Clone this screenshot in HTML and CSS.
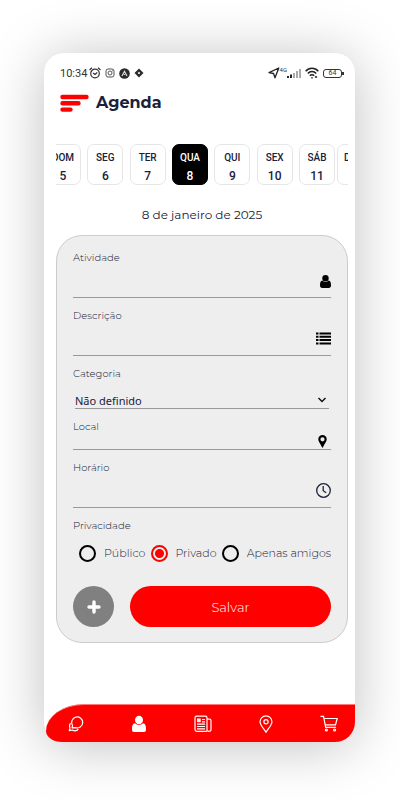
FILE: index.html
```html
<!DOCTYPE html>
<html lang="pt-BR">
<head>
<meta charset="utf-8">
<meta name="viewport" content="width=device-width, initial-scale=1">
<title>Agenda</title>
<link rel="stylesheet" href="styles.css">
</head>
<body>
<div class="phone">
  <div class="status">
    <span class="status-time">10:34</span>
    <svg width="12" height="12" viewBox="0 0 12 12" fill="none" stroke="#333" stroke-width="1.2"><circle cx="6" cy="6.5" r="4.3"/><path d="M.5 3 3 .8M11.5 3 9 .8M4 6l2 1.5L8.200 5.500"/></svg>
    <svg class="status-gap" width="10" height="10" viewBox="0 0 10 10" fill="none" stroke="#555"><rect x="1" y="1" width="8" height="8" rx="2"/><circle cx="5" cy="5" r="2"/><path d="M7 2.800h.8"/></svg>
    <svg class="status-gap" width="11" height="11" viewBox="0 0 11 11"><circle cx="5.500" cy="5.500" r="5.300" fill="#2b2b2b"/><path d="M3 8 5.500 3.200 8 8M5.500 6v1" fill="none" stroke="#ddd" stroke-width="1.200"/></svg>
    <svg class="status-gap" width="10" height="10" viewBox="0 0 10 10"><path d="M5 .5 9.500 5 5 9.500.5 5z" fill="#2b2b2b"/><path d="M5 3.700 6.300 5 5 6.300 3.700 5z" fill="#fff"/></svg>
    <span class="status-space"></span>
    <svg width="12" height="12" viewBox="0 0 12 12" fill="none" stroke="#222" stroke-width="1.300" stroke-linejoin="round"><path d="M10.800 1 7 10.800 5.500 6.500 1 5.600z"/></svg>
    <span class="status-net">4G</span>
    <svg class="status-bars" width="14" height="10" viewBox="0 0 14 10"><path d="M0 8h2v2H0zM3 6.500h2V10H3z" fill="#222"/><path d="M6 5h2v5H6zM9 3h2v7H9zM12 1h2v9h-2z" fill="#aaa"/></svg>
    <svg class="status-wifi" width="14" height="12" viewBox="0 0 14 12" fill="none" stroke="#222" stroke-width="1.500"><path d="M.7 4.200C4 .4 10 .4 13.300 4.200M2.800 6.500c2.300-2.700 6.100-2.700 8.400 0M4.800 8.700c1.200-1.400 3.200-1.400 4.400 0"/><path d="M6.200 10.800h1.600M10 10.500l1-1 1 1" stroke-width="1.200"/></svg>
    <span class="battery">64</span>
  </div>

  <header class="header">
    <button class="menu" aria-label="Menu"><svg width="30" height="19" viewBox="0 0 30 19" stroke="#f00" stroke-width="4.400" stroke-linecap="round"><path d="M2.500 3h24M2.500 9.300h16M2.500 15.600h8"/></svg></button>
    <h1>Agenda</h1>
  </header>

  <nav class="days" aria-label="Dias">
    <div class="week">
      <button class="day">DOM<b>5</b></button>
      <button class="day">SEG<b>6</b></button>
      <button class="day">TER<b>7</b></button>
      <button class="day day-on">QUA<b>8</b></button>
      <button class="day">QUI<b>9</b></button>
      <button class="day">SEX<b>10</b></button>
      <button class="day">SÁB<b>11</b></button>
    </div>
    <div class="week"><button class="day">DOM<b>12</b></button></div>
  </nav>

  <p class="date">8 de janeiro de 2025</p>

  <form class="card">
    <div class="field">
      <label for="atividade">Atividade</label>
      <div class="control">
        <input id="atividade" type="text">
        <svg width="11" height="13" viewBox="0.5 0 11 13"><circle cx="6" cy="3.300" r="3.200"/><path d="M2.800 5.600C1 5.800.5 7.500.5 10.500.5 12 1.300 13 2.700 13h6.600c1.400 0 2.200-1 2.200-2.500 0-3-.5-4.700-2.300-4.900a4.200 4.200 0 0 1-6.400 0z"/></svg>
      </div>
    </div>
    <div class="field">
      <label for="descricao">Descrição</label>
      <div class="control control-list">
        <input id="descricao" type="text">
        <svg width="15" height="13" viewBox="0.5 0 15 13"><path d="M.5.5H3v2H.5zM4 .5h11.500v2H4zM.5 3.800H3v2H.5zM4 3.800h11.500v2H4zM.5 7.100H3v2H.5zM4 7.100h11.500v2H4zM.5 10.400H3v2H.5zM4 10.400h11.500v2H4z"/></svg>
      </div>
    </div>
    <div class="field">
      <label for="categoria">Categoria</label>
      <div class="control control-select">
        <select id="categoria"><option>Não definido</option></select>
        <svg width="10" height="8" viewBox="0 0 10 8" fill="none" stroke="#111" stroke-width="1.500"><path d="m1.500 2 3.500 3.500L8.500 2"/></svg>
      </div>
    </div>
    <div class="field">
      <label for="local">Local</label>
      <div class="control control-low">
        <input id="local" type="text">
        <svg class="pin" width="9" height="13" viewBox="0 0 9 13"><path fill-rule="evenodd" d="M4.500 0A4.200 4.200 0 0 0 .3 4.300C.3 6 1.200 7 4.500 13 7.800 7 8.700 6 8.700 4.300A4.200 4.200 0 0 0 4.500 0zm0 2.200a2.100 2.100 0 1 1 0 4.200 2.100 2.100 0 0 1 0-4.200z"/></svg>
      </div>
    </div>
    <div class="field">
      <label for="horario">Horário</label>
      <div class="control">
        <input id="horario" type="text">
        <svg width="15" height="15" viewBox="0.500 0.500 15 15" fill="none" stroke="#1a2138" stroke-width="1.300"><circle cx="8" cy="8" r="6.800"/><path d="M7.700 3.500v4.700l3 2"/></svg>
      </div>
    </div>
    <fieldset class="privacy">
      <legend>Privacidade</legend>
      <div class="options">
        <label><input type="radio" name="privacidade">Público</label>
        <label><input type="radio" name="privacidade" checked>Privado</label>
        <label><input type="radio" name="privacidade">Apenas amigos</label>
      </div>
    </fieldset>
    <div class="actions">
      <button class="add" type="button" aria-label="Adicionar"><svg width="14" height="14" viewBox="0 0 14 14" stroke="#fff" stroke-width="3.400" stroke-linecap="round"><path d="M7 2v10M2 7h10"/></svg></button>
      <button class="save" type="button">Salvar</button>
    </div>
  </form>

  <nav class="tabs" aria-label="Principal">
    <a href="#conversas" aria-label="Conversas"><svg width="16" height="16" viewBox="0 0 16 16" fill="none" stroke="#fff" stroke-width="1.200" stroke-linejoin="round"><path d="M4.100 11.800 4.500 9.300A5.500 5.500 0 1 1 7.300 11.600zM2.600 7.200c-1.300 1.700-1.100 3.600-.5 4.700L1.300 14.600l3-.6c2 1.100 4.700.8 6-.9"/></svg></a>
    <a href="#perfil" aria-label="Perfil"><svg width="16" height="18" viewBox="0 0 16 18" fill="#fff"><ellipse cx="8" cy="5" rx="4" ry="4.300"/><path d="M4 8.200C1.800 8.700 1 10.300 1 14.500 1 16.300 1.700 17 3.200 17h9.600c1.500 0 2.200-.7 2.200-2.500 0-4.200-.8-5.800-3-6.300a5.300 5.300 0 0 1-8 0z"/></svg></a>
    <a href="#noticias" aria-label="Notícias"><svg width="18" height="18" viewBox="0 0 18 18" fill="none" stroke="#fff" stroke-width="1.200"><path d="M13 16.300H2.700A1.700 1.700 0 0 1 1 14.600V2.700A1.500 1.500 0 0 1 2.500 1.200h9A1.500 1.500 0 0 1 13 2.700v11.800c0 2.400 4 2.400 4 0V5.700A1.500 1.500 0 0 0 15.500 4.200H13M8 4.500h3M8 6.800h3M3 9.200h8M3 11.500h8M3 13.800h8"/><path d="M3 3.500h3.700v3.700H3z" fill="#fff" stroke="none"/></svg></a>
    <a href="#local-mapa" aria-label="Locais"><svg width="14" height="18" viewBox="0 0 14 18" fill="none" stroke="#fff" stroke-width="1.200"><path d="M7 17.200C5.700 14.800 1 10.300 1 6.800A6 6 0 0 1 13 6.800c0 3.500-4.700 8-6 10.400z"/><circle cx="7" cy="6.800" r="2.100"/></svg></a>
    <a href="#carrinho" aria-label="Carrinho"><svg width="18" height="17" viewBox="0 0 18 17" fill="none" stroke="#fff" stroke-width="1.200"><path d="M.5 1.400h3l2.200 11h10.200M4 3.500h13.200l-1.700 6.300H5.300"/><circle cx="6.400" cy="15" r="1"/><circle cx="14.600" cy="15" r="1"/></svg></a>
  </nav>
</div>
</body>
</html>
```
FILE: styles.css
```css
* { box-sizing: border-box; }

body {
  margin: 0;
  min-height: 100vh;
  padding: 53px 45px 58px 44px;
  display: flex;
  background: #fff;
  color: #1a2138;
  font-family: Montserrat, Inter, sans-serif;
}

button, input, select { font: inherit; color: inherit; }
button { border: 0; padding: 0; cursor: pointer; }
svg { display: block; flex: none; }

.phone {
  flex: 1;
  min-width: 0;
  display: flex;
  flex-direction: column;
  background: #fff;
  border-radius: 20px;
  box-shadow: 0 4px 56px rgba(0, 0, 0, 0.25);
}

.status {
  display: flex;
  align-items: center;
  height: 14px;
  margin: 13px 11px 0 16px;
  font-family: Roboto, sans-serif;
  color: #333;
}
.status-time { font-size: 11px; margin-right: 2px; }
.status-gap { margin-left: 4px; }
.status-space { flex: 1; }
.status-net { font-size: 6px; align-self: flex-start; }
.status-bars { margin-right: 4px; }
.status-wifi { margin-right: 4px; }
.battery {
  position: relative;
  width: 19px;
  height: 9px;
  margin-right: 2px;
  border: 1px solid #333;
  border-radius: 3px;
  font-size: 7px;
  line-height: 7px;
  text-align: center;
}
.battery::after {
  content: "";
  position: absolute;
  right: -3px;
  top: 2px;
  width: 2px;
  height: 3px;
  background: #333;
}

.header {
  display: flex;
  align-items: center;
  gap: 6px;
  height: 24px;
  margin: 11px 16px 0;
}
.menu { background: none; }
h1 { margin: 0; font-size: 16px; line-height: 24px; font-weight: 700; }

.days {
  display: flex;
  gap: 2px;
  overflow: hidden;
  margin: 29px 7px 0 12px;
}
.week {
  display: flex;
  flex: none;
  justify-content: space-between;
}
.week:first-child { width: 290px; margin-left: -11px; }
.day {
  width: 36px;
  height: 41px;
  display: flex;
  flex-direction: column;
  align-items: center;
  padding-top: 6px;
  border: 1px solid #e6e6e6;
  border-radius: 7px;
  background: #fff;
  font: 500 10px/14px Roboto, sans-serif;
}
.day b { font-size: 12px; line-height: 14px; font-weight: 500; margin-top: 4px; }
.day-on { background: #000; border-color: #000; color: #fff; }

.date {
  margin: 21px 7px 12px 12px;
  text-align: center;
  font-size: 12px;
  line-height: 17px;
}

.card {
  display: flex;
  flex-direction: column;
  gap: 11px;
  margin: 0 7px 0 12px;
  padding: 15px 16px;
  background: #eee;
  border: 1px solid #ccc;
  border-radius: 26px;
}
.field label, legend {
  display: block;
  padding: 0;
  font-size: 10px;
  line-height: 14px;
  font-weight: 300;
}
.control {
  display: flex;
  align-items: flex-end;
  height: 33px;
  padding-bottom: 9px;
  border-bottom: 1px solid #999;
}
.control input, .control select {
  flex: 1;
  min-width: 0;
  padding: 0;
  border: 0;
  outline: 0;
  background: none;
  font-size: 11px;
  line-height: 14px;
}
.control select {
  appearance: none;
  font-family: "Noto Sans", sans-serif;
}
.control-list { padding-bottom: 10px; }
.control-select { height: 28px; margin: 0 2px; padding-bottom: 0; }
.control-select svg { margin: 0 2px 4px 0; }
.control-low { height: 16px; padding-bottom: 1px; }
.pin { margin-right: 4px; }

.privacy { min-width: 0; margin: 0; padding: 0; border: 0; }
.options {
  display: flex;
  justify-content: space-between;
  margin-top: 11px;
  padding-left: 6px;
}
.options label {
  display: flex;
  align-items: center;
  gap: 8px;
  height: 18px;
  font-size: 11px;
  font-weight: 300;
  white-space: nowrap;
}
.options input {
  appearance: none;
  width: 17px;
  height: 17px;
  margin: 0;
  border: 2px solid #000;
  border-radius: 50%;
}
.options input:checked {
  border-color: #f00;
  background: radial-gradient(circle, #f00 4px, transparent 5px);
}

.actions { display: flex; gap: 16px; margin-top: 13px; }
.add {
  display: grid;
  place-items: center;
  width: 41px;
  height: 41px;
  border-radius: 50%;
  background: #808080;
}
.save {
  flex: 1;
  border-radius: 21px;
  background: #f00;
  color: #fff;
  font-size: 13px;
  font-weight: 300;
}

.tabs {
  display: flex;
  justify-content: space-between;
  align-items: center;
  height: 38px;
  margin: auto 0 0 2px;
  padding: 0 17px 0 22px;
  background: #f00;
  border-top: 1px solid #f77;
  border-radius: 38px 0 20px 16px / 27px 0 20px 11px;
}
```
